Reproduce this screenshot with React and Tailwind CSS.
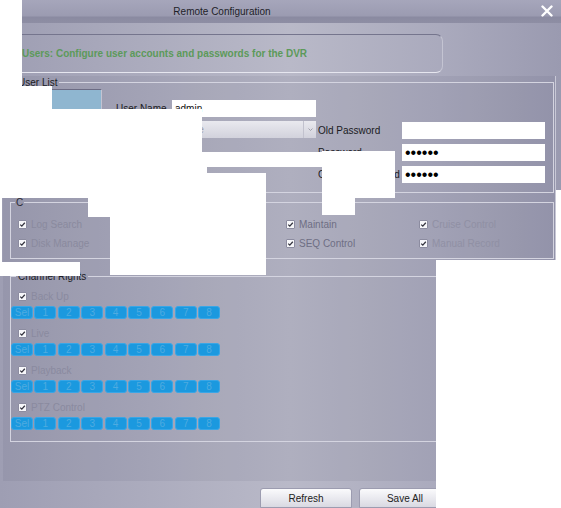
import React from "react";

const Check = () => (
  <span className="flex h-[9px] w-[9px] shrink-0 items-center justify-center rounded-[1px] border border-[#8c8ca0] bg-[#f7f7fa]">
    <svg width="7" height="7" viewBox="0 0 7 7">
      <path d="M1.2 3.6 L2.8 5.1 L5.8 1.8" fill="none" stroke="#34343f" strokeWidth="1.3" />
    </svg>
  </span>
);

function CheckItem({ label, tone }) {
  return (
    <div className="flex h-[19px] items-center gap-[4px]">
      <Check />
      <span className={tone}>{label}</span>
    </div>
  );
}

function Field({ label, children }) {
  return (
    <div className="flex h-[17px] items-center">
      <span className="w-[84px] text-[#1a1a22]">{label}</span>
      <div className="flex h-[17px] w-[143px] items-center bg-white pl-[3px]">{children}</div>
    </div>
  );
}

const Dots = () => <span className="text-[16px] leading-none text-black">••••••</span>;

const channelRights = ["Back Up", "Live", "Playback", "PTZ Control"];
const channelButtons = ["Sel", "1", "2", "3", "4", "5", "6", "7", "8"];

// regions of the window surface left unpainted
const blanks = [
  "left-0 top-0 w-[22px] h-[86px]",
  "left-0 top-[86px] w-[52px] h-[23px]",
  "left-0 top-[109px] w-[202px] h-[43px]",
  "left-0 top-[152px] w-[322px] h-[15px]",
  "left-0 top-[167px] w-[207px] h-[6px]",
  "left-0 top-[173px] w-[266px] h-[25px]",
  "left-[88px] top-[198px] w-[178px] h-[19px]",
  "left-[110px] top-[217px] w-[156px] h-[58px]",
  "left-0 top-[262px] w-[80px] h-[14px]",
  "left-0 top-[198px] w-[2px] h-[64px]",
  "left-[322px] top-[151px] w-[73px] h-[47px]",
  "left-[322px] top-[198px] w-[33px] h-[17px]",
  "left-[436px] top-[260px] w-[125px] h-[248px]",
  "left-[556px] top-[190px] w-[5px] h-[70px]",
];

export default function App() {
  return (
    <div className="relative h-[508px] w-[561px] overflow-hidden bg-white font-['Liberation_Sans',Arial,sans-serif] text-[10px]">
      {/* title bar */}
      <div className="flex h-[23px] bg-[linear-gradient(to_bottom,#a6a6bb_0px,#9b9bb1_16px,#8a8aa1_17px,#8e8ea4_23px)]">
        <div className="w-[444px] pt-[5px] text-center leading-[13px] text-[#1e1e28]">Remote Configuration</div>
        <div className="ml-auto mr-[8px] pt-[5px]">
          <svg width="12" height="12" viewBox="0 0 12 12">
            <path d="M1.5 1.5 L10.5 10.5 M10.5 1.5 L1.5 10.5" stroke="#ffffff" strokeWidth="2.4" strokeLinecap="round" />
          </svg>
        </div>
      </div>

      {/* window body */}
      <div className="flex h-[485px] flex-col bg-[linear-gradient(90deg,#9e9eb3_0px,#b9b9c8_290px,#aaaabd_440px,#9a9ab0_561px)] pt-[11px]">
        <div className="ml-[4px] flex h-[39px] w-[439px] items-center rounded-r-[7px] border-r border-t border-b border-r-[#c4c4d2] border-t-[#75758d] border-b-[#e6e6ef] pl-[18px]">
          <span className="font-bold text-[#5c9a5a]">Users: Configure user accounts and passwords for the DVR</span>
        </div>

        <div className="ml-[3px] mt-[3px] h-[405px] w-[553px] border-r border-r-[#c8c8d6] bg-[rgba(60,60,95,0.08)] pl-[7px] pr-[1px]">
          {/* user list */}
          <fieldset className="m-0 mt-[1px] h-[116px] min-w-0 border border-[#d4d4e0] p-0">
            <legend className="ml-[5px] px-[2px] leading-[11px] text-[#1c1c24]">User List</legend>
            <div className="flex">
              <div className="ml-[7px] mt-[1px] h-[99px] w-[84px] border-r border-t border-r-[#c4c4d2] border-t-[#6c6c84]">
                <div className="h-[19px] bg-[#8fb6d0]" />
              </div>
              <div className="ml-[14px] mt-[12px] flex flex-col gap-[4px]">
                <div className="flex h-[17px] items-center">
                  <span className="w-[56px] text-[#1a1a22]">User Name</span>
                  <div className="flex h-[17px] w-[144px] items-center bg-white pl-[3px] text-[#111]">admin</div>
                </div>
                <div className="ml-[56px] flex h-[17px] w-[144px] bg-[linear-gradient(to_bottom,#e9e9ef,#d2d2dc)]">
                  <span className="flex-1 pl-[8px] leading-[17px] text-[#9a9aa6]">None</span>
                  <span className="flex w-[13px] items-center justify-center border-l border-l-[#c2c2ce]">
                    <svg width="5" height="3" viewBox="0 0 5 3">
                      <path d="M0.5 0.5 L2.5 2.5 L4.5 0.5" fill="none" stroke="#9a9aa6" strokeWidth="0.9" />
                    </svg>
                  </span>
                </div>
              </div>
              <div className="ml-[2px] mt-[34px] flex flex-col gap-[5px]">
                <Field label="Old Password" />
                <Field label="Password">
                  <Dots />
                </Field>
                <Field label="Confirm Password">
                  <Dots />
                </Field>
              </div>
            </div>
          </fieldset>

          {/* operation rights */}
          <fieldset className="m-0 mt-[4px] h-[62px] min-w-0 border border-[#d4d4e0] p-0">
            <legend className="ml-[4px] px-[1px] leading-[11px] text-[#2a2a34]">C</legend>
            <div className="grid grid-cols-[134px_134px_133px_1fr] pl-[7px] pt-[7px]">
              <CheckItem label="Log Search" tone="text-[#8a8a9e]" />
              <CheckItem label="Parameter Setup" tone="text-[#8a8a9e]" />
              <CheckItem label="Maintain" tone="text-[#6e6e84]" />
              <CheckItem label="Cruise Control" tone="text-[#9090a4]" />
              <CheckItem label="Disk Manage" tone="text-[#8a8a9e]" />
              <CheckItem label="Remote Login" tone="text-[#8a8a9e]" />
              <CheckItem label="SEQ Control" tone="text-[#6e6e84]" />
              <CheckItem label="Manual Record" tone="text-[#9090a4]" />
            </div>
          </fieldset>

          {/* channel rights */}
          <fieldset className="m-0 mt-[12px] h-[171px] min-w-0 border border-[#d4d4e0] p-0">
            <legend className="ml-[5px] px-[2px] leading-[11px] text-[#1c1c24]">Channel Rights</legend>
            <div className="flex flex-col gap-[10px] pt-[10px]">
              {channelRights.map((name) => (
                <div key={name} className="flex flex-col gap-[5px]">
                  <div className="flex h-[9px] items-center gap-[4px] pl-[7px]">
                    <Check />
                    <span className="text-[#8a8a9f]">{name}</span>
                  </div>
                  <div className="flex gap-[1.4px]">
                    {channelButtons.map((b) => (
                      <span
                        key={b}
                        className="flex h-[13px] w-[22px] items-center justify-center rounded-[3px] border border-[#3aa6e6] bg-[#1b99df] leading-[11px] text-[#4fabe0]"
                      >
                        {b}
                      </span>
                    ))}
                  </div>
                </div>
              ))}
            </div>
          </fieldset>
        </div>

        {/* command buttons */}
        <div className="flex h-[27px] gap-[7px] pl-[260px] pt-[7px]">
          <button className="h-[20px] w-[92px] rounded-t-[3px] border border-[#9c9cb0] bg-[linear-gradient(to_bottom,#fafafc,#d9d9e2)] text-[10px] text-[#222]">
            Refresh
          </button>
          <button className="h-[20px] w-[92px] rounded-t-[3px] border border-[#9c9cb0] bg-[linear-gradient(to_bottom,#fafafc,#d9d9e2)] text-[10px] text-[#222]">
            Save All
          </button>
        </div>
      </div>

      {blanks.map((c) => (
        <div key={c} className={`absolute bg-white ${c}`} />
      ))}
    </div>
  );
}
